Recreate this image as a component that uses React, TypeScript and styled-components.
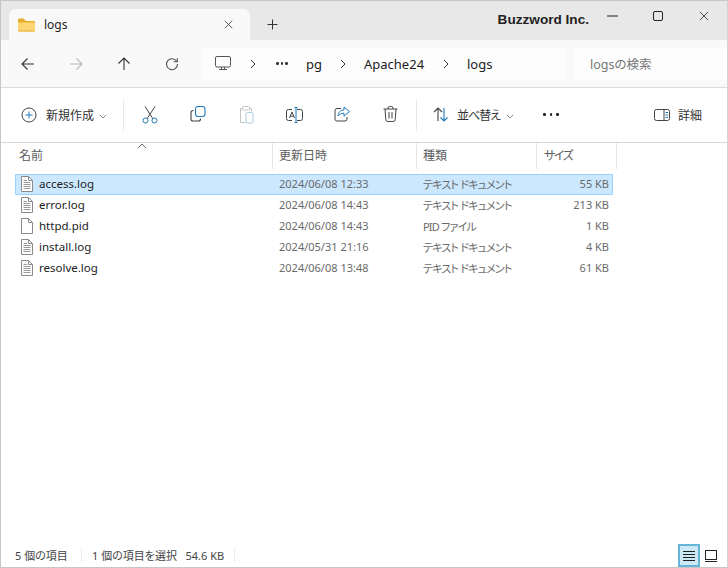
import React from 'react';
import styled, { createGlobalStyle } from 'styled-components';

const GlobalStyle = createGlobalStyle`
  html, body {
    margin: 0;
    padding: 0;
    background: #fff;
  }
  * {
    box-sizing: border-box;
  }
`;

const FONT = `"Noto Sans", "Noto Sans CJK JP", sans-serif`;

const Win = styled.div`
  width: 728px;
  height: 568px;
  display: flex;
  flex-direction: column;
  overflow: hidden;
  background: #fff;
  border: 1px solid #c6c6c6;
  border-right-color: #d4d4d4;
  border-bottom-color: #c6c6c6;
  font-family: ${FONT};
  font-feature-settings: 'palt';
  color: #1c1c1c;
`;

const TitleBar = styled.div`
  height: 39px;
  flex: none;
  display: flex;
  align-items: flex-end;
  background: #e8e8e8;
  padding-left: 8px;
`;

const Tab = styled.div`
  width: 241px;
  height: 31px;
  display: flex;
  align-items: center;
  background: #f9f9f9;
  border-radius: 7px 7px 0 0;
  padding: 0 17px 0 9px;
  font-size: 12px;
`;

const TabName = styled.span`
  flex: 1;
  margin-left: 9px;
`;

const NewTab = styled.div`
  width: 44px;
  height: 31px;
  display: flex;
  align-items: center;
  justify-content: center;
`;

const Brand = styled.div`
  margin-left: auto;
  align-self: stretch;
  display: flex;
  align-items: center;
  padding-bottom: 3px;
  font-size: 13.6px;
  font-weight: 700;
  font-family: "Liberation Sans", sans-serif;
  color: #222;
`;

const WinButtons = styled.div`
  display: flex;
  align-self: stretch;
  align-items: center;
  padding-bottom: 9px;
`;

const WinButton = styled.div`
  width: 46px;
  display: flex;
  justify-content: center;
`;

const NavBar = styled.div`
  height: 48px;
  flex: none;
  display: flex;
  align-items: center;
  background: #f9f9f9;
  border-bottom: 1px solid #dcdcdc;
  padding: 0 0 0 3px;
`;

const NavButton = styled.div`
  width: 48px;
  height: 32px;
  display: flex;
  align-items: center;
  justify-content: center;
`;

const Address = styled.div`
  width: 364px;
  height: 32px;
  margin-left: 6px;
  display: flex;
  align-items: center;
  background: #fdfdfd;
  font-size: 13px;
  padding-left: 13px;
`;

const Crumb = styled.span<{ $w: number }>`
  width: ${p => p.$w}px;
  flex: none;
  display: flex;
  align-items: center;
`;

const Search = styled.div`
  flex: 1;
  height: 32px;
  margin-left: 9px;
  display: flex;
  align-items: center;
  background: #fdfdfd;
  font-size: 12.5px;
  color: #777;
  padding-left: 15px;
`;

const ToolBar = styled.div`
  height: 55px;
  flex: none;
  display: flex;
  align-items: center;
  background: #fff;
  border-bottom: 1px solid #d6d6d6;
  padding: 0 0 1px 20px;
`;

const LabelButton = styled.div<{ $w: number }>`
  width: ${p => p.$w}px;
  flex: none;
  display: flex;
  align-items: center;
  font-size: 12px;
  color: #333;
`;

const LabelText = styled.span<{ $l: number; $tight?: boolean }>`
  margin-left: ${p => p.$l}px;
  letter-spacing: ${p => (p.$tight ? '-1px' : 'normal')};
`;

const Divider = styled.div`
  width: 1px;
  height: 32px;
  flex: none;
  background: #e8e8e8;
`;

const IconGroup = styled.div`
  display: flex;
  padding: 0 2px;
`;

const IconButton = styled.div`
  width: 48px;
  flex: none;
  display: flex;
  justify-content: center;
`;

const Header = styled.div`
  height: 26px;
  flex: none;
  display: flex;
  position: relative;
  font-size: 12px;
  color: #5c5c5c;
`;

const SortCaret = styled.div`
  position: absolute;
  left: 136px;
  top: 0;
  line-height: 0;
`;

const HeaderCell = styled.div<{ $w: number; $pad: number; $tight?: boolean }>`
  width: ${p => p.$w}px;
  flex: none;
  display: flex;
  align-items: center;
  padding-left: ${p => p.$pad}px;
  border-right: 1px solid #e5e5e5;
  padding-bottom: 3px;
  letter-spacing: ${p => (p.$tight ? '-1.5px' : 'normal')};
`;

const List = styled.div`
  flex: 1;
  padding: 5px 0 0 14px;
`;

const Row = styled.div<{ $sel?: boolean }>`
  width: 598px;
  height: 21px;
  display: grid;
  grid-template-columns: 24px 240px 144px 120px 66px;
  align-items: center;
  padding-bottom: 2px;
  background: ${p => (p.$sel ? '#cce8ff' : 'transparent')};
  outline: ${p => (p.$sel ? '1px solid #99d1ff' : 'none')};
  outline-offset: -1px;
  border-radius: 1px;
  font-size: 11px;
  color: #6a6a6a;
`;

const RowIcon = styled.div`
  padding-left: 6px;
  display: flex;
`;

const FileName = styled.div`
  font-size: 11.5px;
  color: #1c1c1c;
`;

const KindCell = styled.div`
  letter-spacing: -0.8px;
`;

const SizeCell = styled.div`
  text-align: right;
`;

const Status = styled.div`
  height: 25px;
  flex: none;
  display: flex;
  align-items: center;
  padding: 0 5px 0 14px;
  font-size: 11px;
  color: #444;
`;

const StatusItem = styled.span<{ $w: number }>`
  width: ${p => p.$w}px;
  flex: none;
`;

const StatusSep = styled.div`
  width: 1px;
  height: 14px;
  flex: none;
  background: #ececec;
`;

const ViewSwitch = styled.div`
  margin-left: auto;
  align-self: flex-end;
  display: flex;
  align-items: center;
`;

const ViewButton = styled.div<{ $on?: boolean }>`
  width: 22px;
  height: 23px;
  display: flex;
  align-items: center;
  justify-content: center;
  background: ${p => (p.$on ? '#cce8f4' : 'transparent')};
  border: 2px solid ${p => (p.$on ? '#66b4d8' : 'transparent')};
`;

const Dots = styled.span`
  display: inline-flex;
  gap: 2px;
`;

const MoreDots = styled(Dots)`
  gap: 4px;
  width: 111px;
  flex: none;
`;

const Dot = styled.i<{ $c: string }>`
  width: 2.5px;
  height: 2.5px;
  border-radius: 50%;
  background: ${p => p.$c};
`;

const Chevron = () => (
  <svg width="6" height="10" viewBox="0 0 6 10" fill="none" stroke="#333" strokeWidth="1">
    <path d="M1 1l4 4-4 4" />
  </svg>
);

const DownCaret = () => (
  <svg width="8" height="5" viewBox="0 0 8 5" fill="none" stroke="#8a8a8a" strokeWidth="1">
    <path d="M.8.8 4 4l3.2-3.2" />
  </svg>
);

const X = ({ size }: { size: number }) => (
  <svg width={size} height={size} viewBox="0 0 12 12" fill="none" stroke="#333" strokeWidth="1.05">
    <path d="M1 1l10 10M11 1 1 11" />
  </svg>
);

const Arrow = ({ rot, color }: { rot: number; color: string }) => (
  <svg width="14" height="14" viewBox="0 0 14 14" fill="none" stroke={color} strokeWidth="1.1" transform={`rotate(${rot})`}>
    <path d="M1 7h12M6.500 1.500 1 7l5.500 5.500" />
  </svg>
);

const TextFileIcon = ({ lines }: { lines: boolean }) => (
  <svg width="12" height="16" viewBox="0 0 12 16" fill="#fff" stroke="#8a8a8a" strokeWidth="1">
    <path d="M.5.5h7l4 4v11H.5z" />
    <path d="M7.500.5v4h4" fill="none" />
    {lines && <path d="M2.500 4.500h3.500M2.500 6.500h7M2.500 8.500h7M2.500 10.500h7M2.500 12.500h7" stroke="#999" fill="none" />}
  </svg>
);

const FolderIcon = () => (
  <svg width="17" height="14" viewBox="0 0 17 14">
    <path d="M0 2a1.500 1.500 0 0 1 1.500-1.500h4L8 3h9v2H0z" fill="#e9ad2c" />
    <path d="M0 4.500h17v8a1 1 0 0 1-1 1H1a1 1 0 0 1-1-1z" fill="#fcd772" />
    <path d="M0 12.500h17a1 1 0 0 1-1 1H1a1 1 0 0 1-1-1z" fill="#e7b03c" />
  </svg>
);

const files = [
  { name: 'access.log', date: '2024/06/08 12:33', kind: 'テキスト ドキュメント', size: '55 KB', sel: true, lines: true },
  { name: 'error.log', date: '2024/06/08 14:43', kind: 'テキスト ドキュメント', size: '213 KB', lines: true },
  { name: 'httpd.pid', date: '2024/06/08 14:43', kind: 'PID ファイル', size: '1 KB', lines: false },
  { name: 'install.log', date: '2024/05/31 21:16', kind: 'テキスト ドキュメント', size: '4 KB', lines: true },
  { name: 'resolve.log', date: '2024/06/08 13:48', kind: 'テキスト ドキュメント', size: '61 KB', lines: true },
];

export default function App() {
  return (
    <Win>
      <GlobalStyle />
      <TitleBar>
        <Tab>
          <FolderIcon />
          <TabName>logs</TabName>
          <X size={9} />
        </Tab>
        <NewTab>
          <svg width="11" height="11" viewBox="0 0 11 11" stroke="#333" strokeWidth="1">
            <path d="M5.500.5v10M.5 5.500h10" />
          </svg>
        </NewTab>
        <Brand>Buzzword Inc.</Brand>
        <WinButtons>
          <WinButton>
            <svg width="11" height="2" viewBox="0 0 11 2" stroke="#222"><path d="M0 1h11" /></svg>
          </WinButton>
          <WinButton>
            <svg width="10" height="10" viewBox="0 0 10 10" fill="none" stroke="#222">
              <rect x=".5" y=".5" width="9" height="9" rx="1.500" />
            </svg>
          </WinButton>
          <WinButton>
            <X size={10} />
          </WinButton>
        </WinButtons>
      </TitleBar>

      <NavBar>
        <NavButton><Arrow rot={0} color="#333" /></NavButton>
        <NavButton><Arrow rot={180} color="#b8b8b8" /></NavButton>
        <NavButton><Arrow rot={90} color="#333" /></NavButton>
        <NavButton>
          <svg width="14" height="14" viewBox="0 0 14 14" fill="none" stroke="#555" strokeWidth="1.1">
            <path d="M11.800 4.500A5.500 5.500 0 1 0 12.500 7" />
            <path d="M12.300 1.200v3.600H8.700" />
          </svg>
        </NavButton>
        <Address>
          <Crumb $w={35}>
            <svg width="16" height="15" viewBox="0 0 16 15" fill="none" stroke="#555" strokeWidth="1">
              <rect x=".5" y=".5" width="15" height="10.500" rx="1.500" />
              <path d="M6.500 11v2.500M9.500 11v2.500M4 13.500h8" />
            </svg>
          </Crumb>
          <Crumb $w={26}><Chevron /></Crumb>
          <Crumb $w={30}>
            <Dots><Dot $c="#333" /><Dot $c="#333" /><Dot $c="#333" /></Dots>
          </Crumb>
          <Crumb $w={34}>pg</Crumb>
          <Crumb $w={24}><Chevron /></Crumb>
          <Crumb $w={79}>Apache24</Crumb>
          <Crumb $w={24}><Chevron /></Crumb>
          <Crumb $w={40}>logs</Crumb>
        </Address>
        <Search>logsの検索</Search>
      </NavBar>

      <ToolBar>
        <LabelButton $w={102}>
          <svg width="16" height="16" viewBox="0 0 16 16" fill="none" strokeWidth="1">
            <circle cx="8" cy="8" r="7" stroke="#444" />
            <path d="M8 4.500v7M4.500 8h7" stroke="#1f78b4" />
          </svg>
          <LabelText $l={9}>新規作成</LabelText>
          <LabelText $l={5}><DownCaret /></LabelText>
        </LabelButton>
        <Divider />
        <IconGroup>
          <IconButton>
            <svg width="16" height="18" viewBox="0 0 16 18" fill="none" strokeWidth="1">
              <path d="M3 .5 10.800 12.500M13 .5 5.200 12.500" stroke="#444" />
              <circle cx="3.500" cy="14.500" r="2.500" stroke="#1f78b4" />
              <circle cx="12.500" cy="14.500" r="2.500" stroke="#1f78b4" />
            </svg>
          </IconButton>
          <IconButton>
            <svg width="16" height="16" viewBox="0 0 16 16" fill="none" strokeWidth="1.1">
              <rect x="5.500" y=".5" width="9.500" height="10" rx="2.500" stroke="#1f78b4" />
              <path d="M3.500 4.500H3a2 2 0 0 0-2 2V13a2 2 0 0 0 2 2h5.500a2 2 0 0 0 2-2v-.5" stroke="#444" />
            </svg>
          </IconButton>
          <IconButton>
            <svg width="15" height="18" viewBox="0 0 15 18" fill="none" strokeWidth="1">
              <path d="M3.500 2.500H1.500v14h5M10.500 2.500h2v3" stroke="#c4c4c4" />
              <rect x="3.500" y=".5" width="7" height="3.500" rx="1" stroke="#c4c4c4" />
              <rect x="7" y="6.500" width="7" height="10.500" rx="1.500" stroke="#a9cbdf" />
            </svg>
          </IconButton>
          <IconButton>
            <svg width="17" height="18" viewBox="0 0 17 18" fill="none" strokeWidth="1">
              <path d="M6 3.500H2.500a2 2 0 0 0-2 2v7a2 2 0 0 0 2 2H6M11 3.500h3.500a2 2 0 0 1 2 2v7a2 2 0 0 1-2 2H11" stroke="#444" />
              <path d="M3.500 12 6 6l2.500 6M4.300 10.200h3.500" stroke="#444" />
              <path d="M8.500 1.500h3M8.500 16.500h3M10 1.500v15" stroke="#1f78b4" />
            </svg>
          </IconButton>
          <IconButton>
            <svg width="16" height="16" viewBox="0 0 16 16" fill="none" strokeWidth="1">
              <path d="M7 2.500H3a2 2 0 0 0-2 2V13a2 2 0 0 0 2 2h8a2 2 0 0 0 2-2v-2" stroke="#444" />
              <path d="M10 1v3C6.500 4 4.500 6 4 10c1.500-2 3.500-2.800 6-2.800v3L15.500 5.500z" stroke="#1f78b4" />
            </svg>
          </IconButton>
          <IconButton>
            <svg width="15" height="16" viewBox="0 0 15 16" fill="none" stroke="#444" strokeWidth="1">
              <path d="M.5 3h14M5 3V2a1.500 1.500 0 0 1 1.500-1.500h2A1.500 1.500 0 0 1 10 2v1" />
              <path d="M2 3l.8 10.500a2 2 0 0 0 2 2h5.400a2 2 0 0 0 2-2L13 3M6 6v6.500M9 6v6.500" />
            </svg>
          </IconButton>
        </IconGroup>
        <Divider />
        <LabelButton $w={126}>
          <svg style={{ marginLeft: 16 }} width="16" height="15" viewBox="0 0 16 15" fill="none" strokeWidth="1.1">
            <path d="M5 14V1M1 5l4-4 4 4" stroke="#444" />
            <path d="M11 1v13M7.500 10.500 11 14l3.500-3.500" stroke="#1f78b4" />
          </svg>
          <LabelText $l={8} $tight>並べ替え</LabelText>
          <LabelText $l={6}><DownCaret /></LabelText>
        </LabelButton>
        <MoreDots>
          <Dot $c="#222" /><Dot $c="#222" /><Dot $c="#222" />
        </MoreDots>
        <LabelButton $w={60}>
          <svg width="16" height="12" viewBox="0 0 16 12" fill="none" strokeWidth="1">
            <rect x=".5" y=".5" width="15" height="11" rx="2" stroke="#444" />
            <path d="M10 .5v11" stroke="#444" />
            <path d="M11.500 3.500h2.500M11.500 6h2.500M11.500 8.500h2.500" stroke="#1f78b4" />
          </svg>
          <LabelText $l={8}>詳細</LabelText>
        </LabelButton>
      </ToolBar>

      <Header>
        <SortCaret>
          <svg width="10" height="6" viewBox="0 0 10 6" fill="none" stroke="#666" strokeWidth="1">
            <path d="M1 5l4-4 4 4" />
          </svg>
        </SortCaret>
        <HeaderCell $w={272} $pad={18}>名前</HeaderCell>
        <HeaderCell $w={144} $pad={6}>更新日時</HeaderCell>
        <HeaderCell $w={120} $pad={6}>種類</HeaderCell>
        <HeaderCell $w={80} $pad={7} $tight>サイズ</HeaderCell>
      </Header>

      <List>
        {files.map(f => (
          <Row key={f.name} $sel={f.sel}>
            <RowIcon><TextFileIcon lines={f.lines} /></RowIcon>
            <FileName>{f.name}</FileName>
            <div>{f.date}</div>
            <KindCell>{f.kind}</KindCell>
            <SizeCell>{f.size}</SizeCell>
          </Row>
        ))}
      </List>

      <Status>
        <StatusItem $w={66}>5 個の項目</StatusItem>
        <StatusSep />
        <StatusItem $w={10} />
        <StatusItem $w={142}>1 個の項目を選択&nbsp;&nbsp;&nbsp;54.6 KB</StatusItem>
        <StatusSep />
        <ViewSwitch>
          <ViewButton $on>
            <svg width="14" height="12" viewBox="0 0 14 12" stroke="#222" strokeWidth="1">
              <path d="M1 1.500h12M1 4.500h12M1 7.500h12M1 10.500h12" />
            </svg>
          </ViewButton>
          <ViewButton>
            <svg width="14" height="14" viewBox="0 0 14 14" fill="none" stroke="#222" strokeWidth="1">
              <rect x="1.500" y="1.500" width="11" height="9" />
              <path d="M1 12.500h12" />
            </svg>
          </ViewButton>
        </ViewSwitch>
      </Status>
    </Win>
  );
}
